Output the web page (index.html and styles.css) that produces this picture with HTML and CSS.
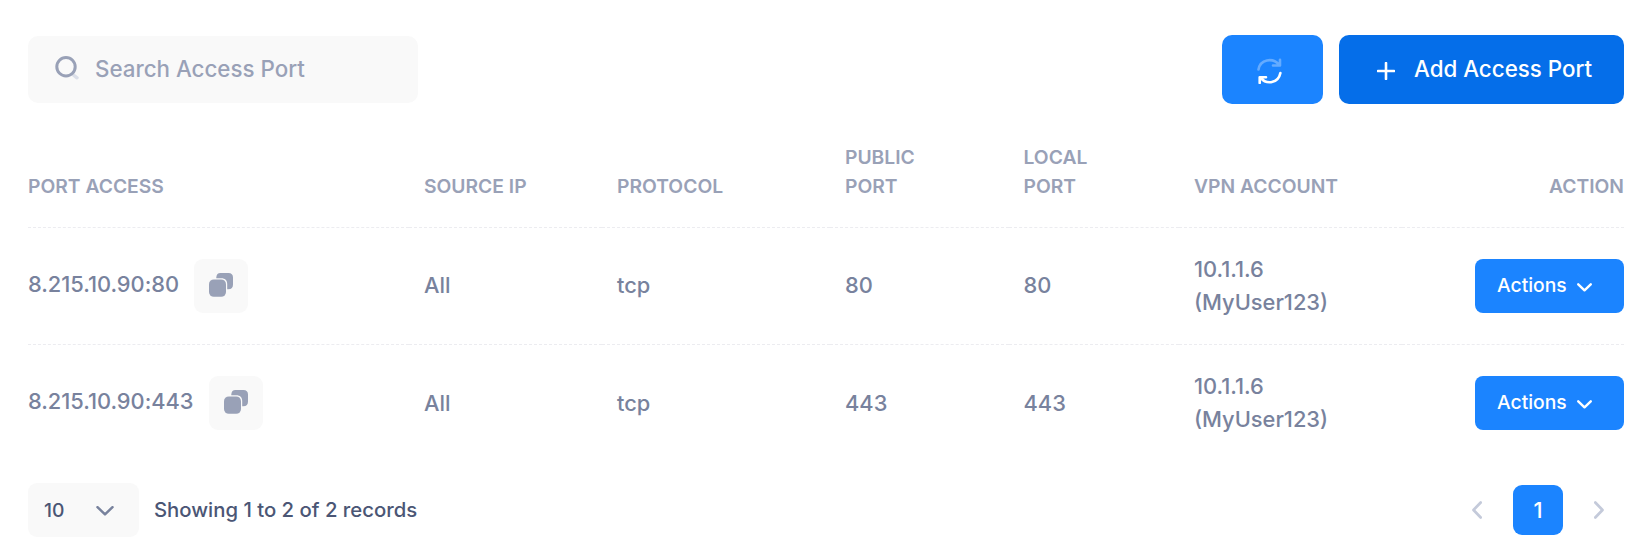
FILE: index.html
```
<!DOCTYPE html>
<html lang="en">
<head>
<meta charset="utf-8">
<title>Access Ports</title>
<link rel="stylesheet" href="styles.css">
</head>
<body>
<svg class="sprite" aria-hidden="true">
  <symbol id="copy" viewBox="0 0 24 24">
    <path d="M7.3 4.2C7.6 1.6 8.8 0 11.4 0H19.5C22.4 0 24 1.6 24 4.5V11.4C24 14.3 22.7 16 19.2 16.3H18.2V11C18.2 7.3 16 5.2 12.4 5.2H7.3Z"/>
    <rect x="0" y="6.4" width="17" height="17.4" rx="4.8"/>
  </symbol>
  <symbol id="down" viewBox="0 0 18 10"><path d="M1.5 1.2L9 8.4L16.5 1.2"/></symbol>
</svg>
<div class="panel">
  <div class="toolbar">
    <label class="search">
      <svg class="search-icon" viewBox="0 0 24 24"><path d="M17.8 18.5L22 21.8" stroke="#dbdfe9" stroke-width="3.4"/><circle cx="11" cy="10.7" r="9.2" stroke="#99a1b7" stroke-width="3"/></svg>
      <input class="search-input" type="text" placeholder="Search Access Port">
    </label>
    <div class="buttons">
      <button class="btn refresh" aria-label="Refresh">
        <svg class="refresh-icon" viewBox="0 0 25 26"><g opacity=".32"><path d="M1.5 11.5C3.2 1.2 15.5-.6 22 6.5M23 1.8V7.5H16"/></g><path d="M23.4 15C21.2 25.6 9.5 27 3.5 19.6M2.7 25V19.2H9"/></svg>
      </button>
      <button class="btn add">
        <svg class="plus-icon" viewBox="0 0 18 18"><path d="M9 1V17M1 9H17"/></svg>
        <span>Add Access Port</span>
      </button>
    </div>
  </div>
  <table class="ports">
    <colgroup><col class="c-access"><col class="c-source"><col class="c-protocol"><col class="c-public"><col class="c-local"><col class="c-vpn"><col class="c-action"></colgroup>
    <thead>
      <tr><th>Port Access</th><th>Source IP</th><th>Protocol</th><th>Public<br>Port</th><th>Local<br>Port</th><th>VPN Account</th><th>Action</th></tr>
    </thead>
    <tbody>
      <tr>
        <td><div class="access"><span>8.215.10.90:80</span><button class="copy" aria-label="Copy"><svg class="copy-icon"><use href="#copy"/></svg></button></div></td>
        <td>All</td><td>tcp</td><td>80</td><td>80</td><td>10.1.1.6<br>(MyUser123)</td>
        <td><button class="btn actions">Actions<svg class="actions-icon"><use href="#down"/></svg></button></td>
      </tr>
      <tr>
        <td><div class="access"><span>8.215.10.90:443</span><button class="copy" aria-label="Copy"><svg class="copy-icon"><use href="#copy"/></svg></button></div></td>
        <td class="single">All</td><td class="single">tcp</td><td class="single">443</td><td class="single">443</td><td>10.1.1.6<br>(MyUser123)</td>
        <td><button class="btn actions">Actions<svg class="actions-icon"><use href="#down"/></svg></button></td>
      </tr>
    </tbody>
  </table>
  <div class="footer">
    <div class="length">
      <button class="select">10<svg class="select-icon"><use href="#down"/></svg></button>
      <span class="summary">Showing 1 to 2 of 2 records</span>
    </div>
    <div class="pages">
      <button class="page" aria-label="Previous"><svg class="page-icon" viewBox="0 0 10 18"><path d="M8.7 1.5L1.5 9L8.7 16.5"/></svg></button>
      <button class="page current">1</button>
      <button class="page" aria-label="Next"><svg class="page-icon" viewBox="0 0 10 18"><path d="M1.3 1.5L8.5 9L1.3 16.5"/></svg></button>
    </div>
  </div>
</div>
</body>
</html>
```
FILE: styles.css
```
* { box-sizing: border-box; }
html { font-size: 20.3125px; }
body { margin: 0; background: #fff; overflow: hidden; font-family: Inter, "Liberation Sans", sans-serif; color: #4b5675; }
button, input { font: inherit; border: 0; margin: 0; padding: 0; }
svg { display: block; fill: none; stroke-linecap: round; stroke-linejoin: round; }
.sprite { display: none; }
.panel { padding: 35px 17px 0 28px; }
.toolbar { display: flex; justify-content: space-between; align-items: flex-start; height: 69px; }
.search { display: flex; align-items: center; width: 390px; height: 67px; margin-top: 1px; padding-left: 27px; border-radius: 10px; background: #f9f9f9; }
.search-icon { width: 24px; height: 24px; margin-top: -3px; }
.search-input { width: 280px; margin: -2px 0 0 16px; background: none; outline: 0; font-size: 1.1rem; font-weight: 500; color: #4b5675; }
.search-input::placeholder { color: #99a1b7; opacity: 1; }
.buttons { display: flex; gap: 16px; }
.btn { display: flex; align-items: center; border-radius: 10px; background: #1b84ff; color: #fff; font-weight: 500; }
.refresh { width: 101px; height: 69px; justify-content: center; padding-right: 6px; padding-top: 3px; }
.refresh-icon { width: 25px; height: 26px; stroke: #fff; stroke-width: 2.6; }
.add { width: 285px; height: 69px; padding: 0 0 2px 38px; gap: 19px; background: #056ee9; font-size: 1.1rem; }
.plus-icon { width: 18px; height: 18px; margin-top: 4px; stroke: #fff; stroke-width: 2.6; }
.ports { width: 1596px; margin-top: 27px; table-layout: fixed; border-collapse: collapse; }
.c-access { width: 381px; }
.c-source { width: 193px; }
.c-protocol { width: 228px; }
.c-public { width: 178.5px; }
.c-local { width: 170.5px; }
.c-vpn { width: 223px; }
.c-action { width: 222px; }
th, td { padding: 0 15px; text-align: left; }
th:first-child, td:first-child { padding-left: 0; }
th:last-child, td:last-child { padding-right: 0; text-align: right; }
th { height: 96px; padding-bottom: 26px; vertical-align: bottom; font-size: .95rem; font-weight: 600; line-height: 29px; text-transform: uppercase; color: #99a1b7; }
th, tbody tr:first-child td { border-bottom: 1px dashed #ececf0; }
td { height: 117px; vertical-align: middle; font-size: 1.075rem; font-weight: 500; line-height: 32.75px; color: #78829d; }
td.single { padding-top: 2px; }
.access { display: flex; align-items: center; gap: 15px; }
.access span { margin-top: -2px; letter-spacing: -.02px; }
.copy { display: flex; align-items: center; justify-content: center; width: 54px; height: 54px; border-radius: 9px; background: #f9f9f9; }
.copy-icon { width: 24px; height: 24px; margin-top: -2px; fill: #99a1b7; }
.actions { width: 149px; height: 54px; margin-left: auto; padding-left: 22px; border-radius: 8px; font-size: .95rem; }
.actions-icon { width: 15px; height: 9px; margin: 3px 0 0 10px; stroke: #fff; stroke-width: 2.9; }
.footer { display: flex; justify-content: space-between; align-items: center; height: 54px; margin-top: 22px; }
.length { display: flex; align-items: center; gap: 15px; font-size: 1rem; font-weight: 500; }
.summary { margin-top: -2px; }
.select { display: flex; align-items: center; justify-content: space-between; width: 111px; height: 54px; padding: 0 25px 0 16px; border-radius: 9px; background: #f9f9f9; color: #4b5675; font-size: .95rem; font-weight: 500; }
.select-icon { width: 18px; height: 10px; margin-top: 1px; stroke: #78829d; stroke-width: 2.5; }
.pages { display: flex; gap: 11px; }
.page { display: flex; align-items: center; justify-content: center; width: 50px; height: 50px; border-radius: 9px; background: none; font-size: 1.075rem; font-weight: 500; }
.page-icon { width: 10px; height: 18px; stroke: #c4cada; stroke-width: 2.7; }
.page.current { background: #1b84ff; color: #fff; }
```
